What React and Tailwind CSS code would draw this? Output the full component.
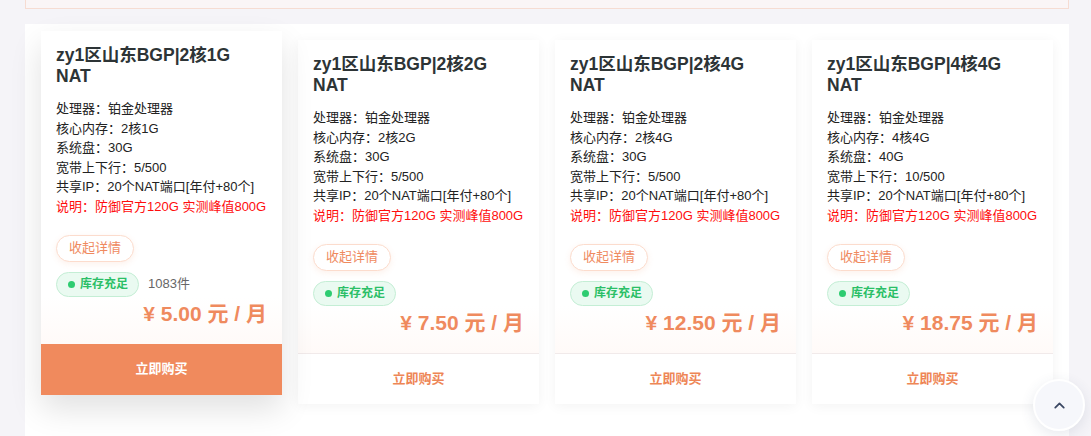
import React from 'react';
import { ChevronUp } from 'lucide-react';

const plans = [
    { core: '2核1G', mem: '2核1G', disk: '30G', bw: '5/500', price: '5.00', stock: '1083件' },
    { core: '2核2G', mem: '2核2G', disk: '30G', bw: '5/500', price: '7.50' },
    { core: '2核4G', mem: '2核4G', disk: '30G', bw: '5/500', price: '12.50' },
    { core: '4核4G', mem: '4核4G', disk: '40G', bw: '10/500', price: '18.75' },
];

const PlanCard = ({ plan, active }) => {
    return (
        <div
            className={`flex flex-col bg-white transition-all ${active
                    ? '-translate-y-[9px] shadow-[0_14px_30px_rgba(0,0,0,0.12)]'
                    : 'shadow-[0_2px_12px_rgba(0,0,0,0.05)]'
                }`}
        >
            <div className="px-[15px] pt-[14px] pb-[16px] bg-gradient-to-b from-white from-85% to-[#fffaf8]">
                <h3 className="text-[17.5px] leading-[21px] font-bold text-[#2d3436]">
                    zy1区山东BGP|{plan.core}
                    <br />
                    NAT
                </h3>
                <div className="mt-[12px] text-[13px] leading-[19.6px] text-[#222]">
                    <p>处理器：铂金处理器</p>
                    <p>核心内存：{plan.mem}</p>
                    <p>系统盘：{plan.disk}</p>
                    <p>宽带上下行：{plan.bw}</p>
                    <p>共享IP：20个NAT端口[年付+80个]</p>
                    <p className="text-[#ff0d0d]">说明：防御官方120G 实测峰值800G</p>
                </div>
                <button className="mt-[18px] h-[27px] px-[12px] rounded-full border border-[#fcdccd] bg-white text-[13px] text-[#ef8a5f] shadow-[0_2px_6px_rgba(240,138,94,0.12)]">
                    收起详情
                </button>
                <div className="mt-[10px] flex items-center gap-[9px]">
                    <span className="flex items-center gap-[5px] h-[25px] pl-[11px] pr-[10px] rounded-full border border-[#c4eed5] bg-[#eafaf1] text-[12px] font-bold text-[#2bbf67]">
                        <span className="w-[7px] h-[7px] rounded-full bg-[#2ecc71]" />
                        库存充足
                    </span>
                    {plan.stock && (
                        <span className="text-[13px] text-[#666]">{plan.stock}</span>
                    )}
                </div>
                <div className="mt-[3px] text-right text-[21px] leading-[28px] font-bold text-[#ef8a5e]">
                    ¥ {plan.price} 元 / 月
                </div>
            </div>
            <button
                className={`h-[51px] text-[13px] font-bold ${active
                        ? 'bg-[#f08a5d] text-white'
                        : 'border-t border-[#f1eaea] bg-white text-[#ee8656]'
                    }`}
            >
                立即购买
            </button>
        </div>
    );
};

const App = () => {
    return (
        <div
            className="relative h-[436px] overflow-hidden bg-[#f5f4f8]"
            style={{ fontFamily: '"Liberation Sans", Arial, "Noto Sans CJK SC", sans-serif' }}
        >
            <div className="ml-[25px] w-[1044px] h-[9px] border-x border-b border-[#f6dcd2] bg-[#faf5f6]" />
            <div className="ml-[25px] w-[1044px] mt-[15px] bg-white p-4 pb-10">
                <div className="grid grid-cols-4 gap-4">
                    {plans.map((plan, i) => (
                        <PlanCard key={plan.core} plan={plan} active={i === 0} />
                    ))}
                </div>
            </div>
            <button className="absolute left-[1033px] top-[379px] w-[52px] h-[52px] rounded-full border-2 border-white bg-[#f6f7fb] shadow-[0_4px_14px_rgba(60,70,110,0.12)] flex items-center justify-center text-[#3b4863]">
                <ChevronUp size={17} strokeWidth={2.5} />
            </button>
        </div>
    );
};

export default App;
